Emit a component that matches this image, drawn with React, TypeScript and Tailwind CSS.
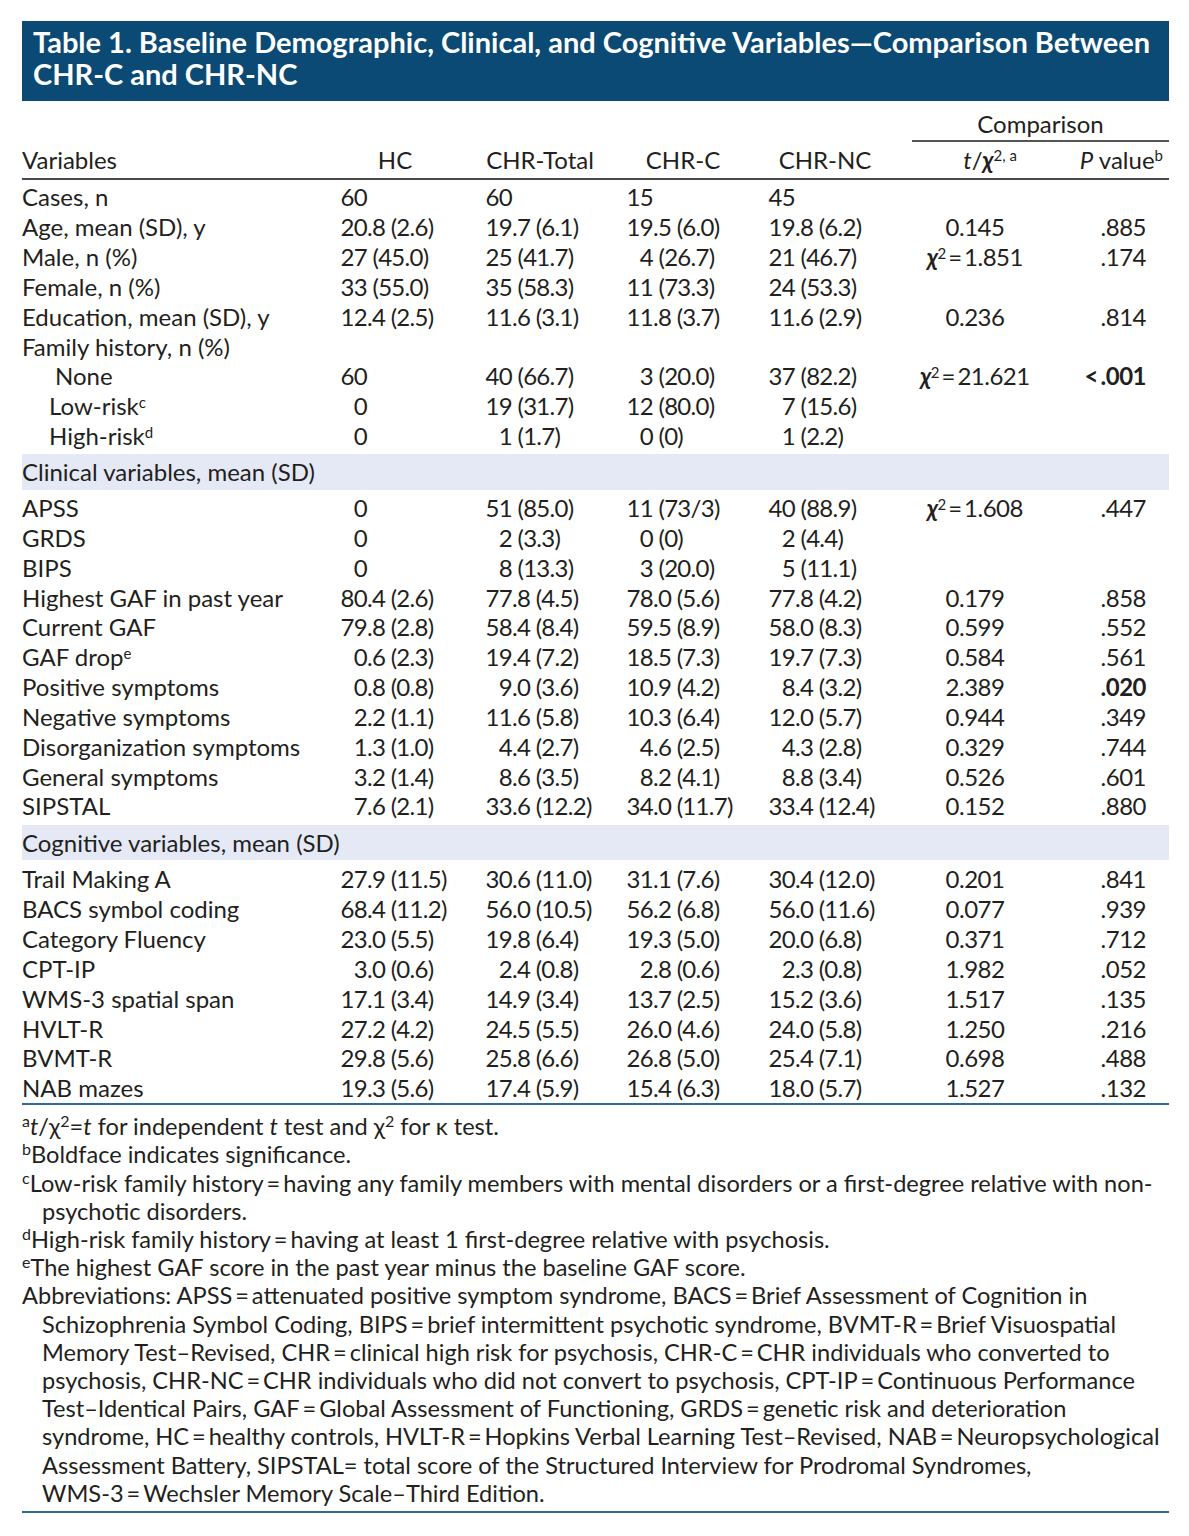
import React from "react";

type Row =
  | { kind: "band"; label: string; last?: boolean }
  | {
      kind: "row";
      label: React.ReactNode;
      indent?: string;
      v: string[];
      t?: React.ReactNode;
      p?: string;
      bold?: boolean;
    };

const chi = (val: string) => (
  <>
    <span className="font-bold italic">χ</span>
    <sup className="text-[15px]">2</sup>
    {"\u2009=\u2009"}
    {val}
  </>
);

const rows: Row[] = [
  { kind: "row", label: "Cases, n", v: ["60", "60", "15", "45"] },
  { kind: "row", label: "Age, mean (SD), y", v: ["20.8 (2.6)", "19.7 (6.1)", "19.5 (6.0)", "19.8 (6.2)"], t: "0.145", p: ".885" },
  { kind: "row", label: "Male, n (%)", v: ["27 (45.0)", "25 (41.7)", "4 (26.7)", "21 (46.7)"], t: chi("1.851"), p: ".174" },
  { kind: "row", label: "Female, n (%)", v: ["33 (55.0)", "35 (58.3)", "11 (73.3)", "24 (53.3)"] },
  { kind: "row", label: "Education, mean (SD), y", v: ["12.4 (2.5)", "11.6 (3.1)", "11.8 (3.7)", "11.6 (2.9)"], t: "0.236", p: ".814" },
  { kind: "row", label: "Family history, n (%)", v: ["", "", "", ""] },
  { kind: "row", label: "None", indent: "pl-[33px]", v: ["60", "40 (66.7)", "3 (20.0)", "37 (82.2)"], t: chi("21.621"), p: "<\u2009.001", bold: true },
  { kind: "row", label: <>Low-risk<sup className="text-[15px]">c</sup></>, indent: "pl-[27px]", v: ["0", "19 (31.7)", "12 (80.0)", "7 (15.6)"] },
  { kind: "row", label: <>High-risk<sup className="text-[15px]">d</sup></>, indent: "pl-[27px]", v: ["0", "1 (1.7)", "0 (0)", "1 (2.2)"] },
  { kind: "band", label: "Clinical variables, mean (SD)" },
  { kind: "row", label: "APSS", v: ["0", "51 (85.0)", "11 (73/3)", "40 (88.9)"], t: chi("1.608"), p: ".447" },
  { kind: "row", label: "GRDS", v: ["0", "2 (3.3)", "0 (0)", "2 (4.4)"] },
  { kind: "row", label: "BIPS", v: ["0", "8 (13.3)", "3 (20.0)", "5 (11.1)"] },
  { kind: "row", label: "Highest GAF in past year", v: ["80.4 (2.6)", "77.8 (4.5)", "78.0 (5.6)", "77.8 (4.2)"], t: "0.179", p: ".858" },
  { kind: "row", label: "Current GAF", v: ["79.8 (2.8)", "58.4 (8.4)", "59.5 (8.9)", "58.0 (8.3)"], t: "0.599", p: ".552" },
  { kind: "row", label: <>GAF drop<sup className="text-[15px]">e</sup></>, v: ["0.6 (2.3)", "19.4 (7.2)", "18.5 (7.3)", "19.7 (7.3)"], t: "0.584", p: ".561" },
  { kind: "row", label: "Positive symptoms", v: ["0.8 (0.8)", "9.0 (3.6)", "10.9 (4.2)", "8.4 (3.2)"], t: "2.389", p: ".020", bold: true },
  { kind: "row", label: "Negative symptoms", v: ["2.2 (1.1)", "11.6 (5.8)", "10.3 (6.4)", "12.0 (5.7)"], t: "0.944", p: ".349" },
  { kind: "row", label: "Disorganization symptoms", v: ["1.3 (1.0)", "4.4 (2.7)", "4.6 (2.5)", "4.3 (2.8)"], t: "0.329", p: ".744" },
  { kind: "row", label: "General symptoms", v: ["3.2 (1.4)", "8.6 (3.5)", "8.2 (4.1)", "8.8 (3.4)"], t: "0.526", p: ".601" },
  { kind: "row", label: "SIPSTAL", v: ["7.6 (2.1)", "33.6 (12.2)", "34.0 (11.7)", "33.4 (12.4)"], t: "0.152", p: ".880" },
  { kind: "band", label: "Cognitive variables, mean (SD)", last: true },
  { kind: "row", label: "Trail Making A", v: ["27.9 (11.5)", "30.6 (11.0)", "31.1 (7.6)", "30.4 (12.0)"], t: "0.201", p: ".841" },
  { kind: "row", label: "BACS symbol coding", v: ["68.4 (11.2)", "56.0 (10.5)", "56.2 (6.8)", "56.0 (11.6)"], t: "0.077", p: ".939" },
  { kind: "row", label: "Category Fluency", v: ["23.0 (5.5)", "19.8 (6.4)", "19.3 (5.0)", "20.0 (6.8)"], t: "0.371", p: ".712" },
  { kind: "row", label: "CPT-IP", v: ["3.0 (0.6)", "2.4 (0.8)", "2.8 (0.6)", "2.3 (0.8)"], t: "1.982", p: ".052" },
  { kind: "row", label: "WMS-3 spatial span", v: ["17.1 (3.4)", "14.9 (3.4)", "13.7 (2.5)", "15.2 (3.6)"], t: "1.517", p: ".135" },
  { kind: "row", label: "HVLT-R", v: ["27.2 (4.2)", "24.5 (5.5)", "26.0 (4.6)", "24.0 (5.8)"], t: "1.250", p: ".216" },
  { kind: "row", label: "BVMT-R", v: ["29.8 (5.6)", "25.8 (6.6)", "26.8 (5.0)", "25.4 (7.1)"], t: "0.698", p: ".488" },
  { kind: "row", label: "NAB mazes", v: ["19.3 (5.6)", "17.4 (5.9)", "15.4 (6.3)", "18.0 (5.7)"], t: "1.527", p: ".132" },
];

const cols = [
  { cell: "w-[150px]", box: "w-[57px]" },
  { cell: "w-[140px]", box: "w-[52px]" },
  { cell: "w-[145px]", box: "w-[53px]" },
  { cell: "w-[155px]", box: "w-[50px]" },
];

function NumCell({ value, idx }: { value: string; idx: number }) {
  const m = value.match(/^(\d*)(.*)$/);
  const int = m ? m[1] : value;
  const rest = m ? m[2] : "";
  return (
    <div className={`${cols[idx].cell} flex shrink-0 tracking-[-0.7px]`}>
      <span className={`${cols[idx].box} text-right shrink-0`}>{int}</span>
      <span className="whitespace-pre">{rest}</span>
    </div>
  );
}

function Sup({ children }: { children: React.ReactNode }) {
  return <sup className="text-[16px]">{children}</sup>;
}

const footLines: { text: React.ReactNode; cont?: boolean }[] = [
  {
    text: (
      <>
        <Sup>a</Sup>
        <i>t</i>/χ<Sup>2</Sup>=<i>t</i> for independent <i>t</i> test and χ<Sup>2</Sup> for κ test.
      </>
    ),
  },
  { text: (<><Sup>b</Sup>Boldface indicates significance.</>) },
  {
    text: (
      <>
        <Sup>c</Sup>Low-risk family history{"\u2009=\u2009"}having any family members with mental disorders or a first-degree relative with non-
      </>
    ),
  },
  { text: "psychotic disorders.", cont: true },
  {
    text: (
      <>
        <Sup>d</Sup>High-risk family history{"\u2009=\u2009"}having at least 1 first-degree relative with psychosis.
      </>
    ),
  },
  { text: (<><Sup>e</Sup>The highest GAF score in the past year minus the baseline GAF score.</>) },
  { text: "Abbreviations: APSS\u2009=\u2009attenuated positive symptom syndrome, BACS\u2009=\u2009Brief Assessment of Cognition in" },
  { text: "Schizophrenia Symbol Coding, BIPS\u2009=\u2009brief intermittent psychotic syndrome, BVMT-R\u2009=\u2009Brief Visuospatial", cont: true },
  { text: "Memory Test–Revised, CHR\u2009=\u2009clinical high risk for psychosis, CHR-C\u2009=\u2009CHR individuals who converted to", cont: true },
  { text: "psychosis, CHR-NC\u2009=\u2009CHR individuals who did not convert to psychosis, CPT-IP\u2009=\u2009Continuous Performance", cont: true },
  { text: "Test–Identical Pairs, GAF\u2009=\u2009Global Assessment of Functioning, GRDS\u2009=\u2009genetic risk and deterioration", cont: true },
  { text: "syndrome, HC\u2009=\u2009healthy controls, HVLT-R\u2009=\u2009Hopkins Verbal Learning Test–Revised, NAB\u2009=\u2009Neuropsychological", cont: true },
  { text: "Assessment Battery, SIPSTAL= total score of the Structured Interview for Prodromal Syndromes,", cont: true },
  { text: "WMS-3\u2009=\u2009Wechsler Memory Scale–Third Edition.", cont: true },
];

export default function App() {
  return (
    <div className="w-[1189px] min-h-[1536px] bg-white font-[Lato,sans-serif] text-[#231f20] pt-[21px]">
      <div className="ml-[22px] w-[1147px]">
        {/* Title */}
        <div className="h-[80px] bg-[#0b4a74] pl-[11px] pt-[5px] text-white font-bold text-[29px] leading-[32px] whitespace-nowrap">
          Table 1. Baseline Demographic, Clinical, and Cognitive Variables—Comparison Between
          <br />
          CHR-C and CHR-NC
        </div>

        {/* Comparison header */}
        <div className="mt-[7px] flex h-[32px] items-center text-[24px] leading-[30px]">
          <div className="w-[890px] shrink-0" />
          <div className="flex-1 flex flex-col">
            <div className="text-center">Comparison</div>
          </div>
        </div>
        <div className="flex">
          <div className="w-[890px] shrink-0" />
          <div className="flex-1 h-[1.5px] bg-[#555]" />
        </div>

        {/* Column header */}
        <div className="flex h-[36px] items-center text-[24px] leading-[30px] tabular-nums">
          <div className="w-[288px] shrink-0">Variables</div>
          <div className="w-[150px] shrink-0 pl-[20px] text-center">HC</div>
          <div className="w-[140px] shrink-0 pl-[20px] text-center">CHR-Total</div>
          <div className="w-[145px] shrink-0 pl-[21px] text-center">CHR-C</div>
          <div className="w-[155px] shrink-0 pl-[5px] text-center">CHR-NC</div>
          <div className="w-[150px] shrink-0 pl-[30px] text-center">
            <i>t</i>/<span className="font-bold italic">χ</span>
            <sup className="text-[15px]">2, a</sup>
          </div>
          <div className="flex-1 text-right pr-[6px]">
            <i>P</i> value<sup className="text-[15px]">b</sup>
          </div>
        </div>
        <div className="h-[2px] bg-[#4a4a4a]" />

        {/* Body */}
        <div className="pt-[3px] text-[24px] leading-[30px] tabular-nums">
          {rows.map((r, i) => {
            if (r.kind === "band") {
              return (
                <div key={i} className={r.last ? "pt-[4px] pb-[4px]" : "pt-[3px] pb-[3px]"}>
                  <div className={`${r.last ? "h-[35px]" : "h-[36px]"} bg-[#e5e9f6] flex items-center`}>{r.label}</div>
                </div>
              );
            }
            return (
              <div key={i} className="h-[29.85px] flex items-center whitespace-nowrap">
                <div className={`w-[288px] shrink-0 ${r.indent ?? ""}`}>{r.label}</div>
                {r.v.map((val, j) => (
                  <NumCell key={j} value={val} idx={j} />
                ))}
                <div className="w-[150px] shrink-0 text-center tracking-[-0.5px]">{r.t}</div>
                <div className={`w-[96px] shrink-0 text-right tracking-[-0.5px] ${r.bold ? "font-bold" : ""}`}>{r.p}</div>
              </div>
            );
          })}
        </div>
        <div className="h-[2px] bg-[#2f6a9c]" />

        {/* Footnotes */}
        <div className="mt-[7px] text-[23.6px] leading-[28.2px]">
          {footLines.map((l, i) => (
            <div key={i} className={`whitespace-nowrap ${l.cont ? "pl-[20px]" : ""}`}>
              {l.text}
            </div>
          ))}
        </div>
        <div className="mt-[4px] h-[2.5px] bg-[#2f6a9c]" />
      </div>
    </div>
  );
}
